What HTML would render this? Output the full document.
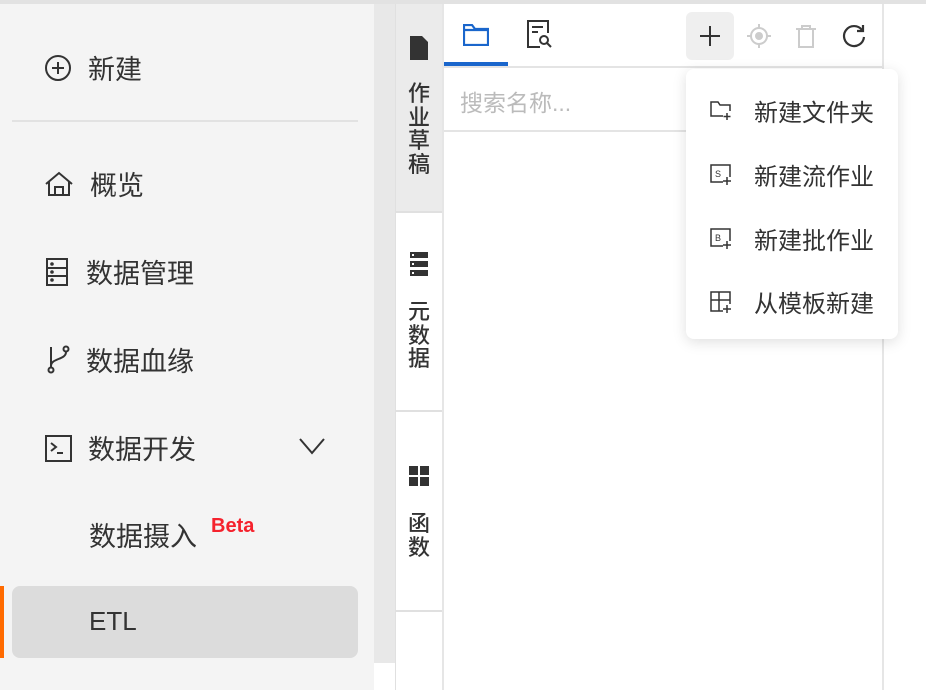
<!DOCTYPE html><html><head><meta charset="utf-8"><style>
*{margin:0;padding:0;box-sizing:border-box}
body{width:926px;height:690px;overflow:hidden;background:#fff;font-family:"Liberation Sans","Noto Sans CJK SC",sans-serif;position:relative;color:#333}
.a{position:absolute}
.side{left:0;top:4px;width:374px;height:686px;background:#f4f4f4}
.item{position:absolute;left:44px;font-size:27px;color:#333;display:flex;align-items:center}
.item svg{margin-right:16px}
.vt{position:absolute;left:404px;width:30px;font-size:22px;line-height:23.5px;text-align:center;color:#333;font-weight:500}
.mi{position:absolute;left:710px;font-size:24px;color:#333;display:flex;align-items:center}
.mi svg{margin-right:22px}
</style></head><body>
<div class="a" style="left:0;top:0;width:926px;height:4px;background:#e2e2e2"></div>
<div class="a side"></div>
<div class="a" style="left:374px;top:4px;width:21px;height:659px;background:#e8e8e8"></div>
<div class="a" style="left:12px;top:120px;width:346px;height:2px;background:#e2e2e2"></div>

<div class="item" style="top:48px"><svg width="28" height="28" viewBox="0 0 28 28" fill="none" stroke="#333" stroke-width="2"><circle cx="14" cy="14" r="12"/><path d="M14 8v12M8 14h12"/></svg>新建</div>
<div class="item" style="top:164px"><svg width="30" height="28" viewBox="0 0 30 28" fill="none" stroke="#333" stroke-width="2"><path d="M2 14L15 3l13 11M5 12v13h20V12M11 25v-8h8v8"/></svg>概览</div>
<div class="item" style="top:252px"><svg width="26" height="30" viewBox="0 0 26 30" fill="none" stroke="#333" stroke-width="2"><rect x="3" y="2" width="20" height="26"/><path d="M3 11h20M3 19h20"/><circle cx="8" cy="7" r=".8" fill="#333"/><circle cx="8" cy="15" r=".8" fill="#333"/><circle cx="8" cy="23" r=".8" fill="#333"/></svg>数据管理</div>
<div class="item" style="top:340px"><svg width="26" height="30" viewBox="0 0 26 30" fill="none" stroke="#333" stroke-width="2"><circle cx="7" cy="25" r="2.5"/><circle cx="22" cy="4" r="2.5"/><path d="M7 2v20M22 7c0 8-15 6-15 14"/></svg>数据血缘</div>
<div class="item" style="top:428px"><svg width="28" height="28" viewBox="0 0 28 28" fill="none" stroke="#333" stroke-width="2"><rect x="2" y="2" width="25" height="25"/><path d="M7 9l5 4-5 4M13 19h6"/></svg>数据开发</div>
<svg class="a" style="left:298px;top:436px" width="28" height="20" viewBox="0 0 28 20" fill="none" stroke="#333" stroke-width="2"><path d="M2 3l12 14L26 3"/></svg>
<div class="a" style="left:89px;top:515px;font-size:27px;color:#333">数据摄入</div>
<div class="a" style="left:211px;top:515px;font-size:20px;color:#f5222d;font-weight:bold">Beta</div>
<div class="a" style="left:0;top:586px;width:4px;height:72px;background:#ff6a00"></div>
<div class="a" style="left:12px;top:586px;width:346px;height:72px;background:#dcdcdc;border-radius:8px"></div>
<div class="a" style="left:89px;top:606px;font-size:26px;color:#333">ETL</div>

<div class="a" style="left:395px;top:4px;width:48px;height:207px;background:#ebebeb"></div>
<div class="a" style="left:395px;top:211px;width:48px;height:479px;background:#fff"></div>
<div class="a" style="left:395px;top:211px;width:48px;height:2px;background:#e0e0e0"></div>
<div class="a" style="left:395px;top:410px;width:48px;height:2px;background:#e0e0e0"></div>
<div class="a" style="left:395px;top:610px;width:48px;height:2px;background:#e0e0e0"></div>
<div class="a" style="left:395px;top:4px;width:1px;height:686px;background:#e0e0e0"></div>
<div class="a" style="left:442px;top:4px;width:2px;height:686px;background:#e6e6e6"></div>
<svg class="a" style="left:410px;top:36px" width="18" height="24" viewBox="0 0 18 24"><path d="M0 0h12l6 6v18H0z" fill="#333"/></svg>
<div class="vt" style="top:82px">作<br>业<br>草<br>稿</div>
<svg class="a" style="left:410px;top:252px" width="18" height="24" viewBox="0 0 18 24"><g fill="#333"><rect y="0" width="18" height="6"/><rect y="9" width="18" height="6"/><rect y="18" width="18" height="6"/></g><g fill="#fff"><rect x="2" y="2" width="2" height="2"/><rect x="2" y="11" width="2" height="2"/><rect x="2" y="20" width="2" height="2"/></g></svg>
<div class="vt" style="top:300px">元<br>数<br>据</div>
<svg class="a" style="left:409px;top:466px" width="20" height="20" viewBox="0 0 20 20" fill="#333"><rect width="9" height="9"/><rect x="11" width="9" height="9"/><rect y="11" width="9" height="9"/><rect x="11" y="11" width="9" height="9"/></svg>
<div class="vt" style="top:512px">函<br>数</div>

<div class="a" style="left:444px;top:66px;width:439px;height:2px;background:#e4e4e4"></div>
<div class="a" style="left:444px;top:62px;width:64px;height:4px;background:#1a66cc"></div>
<div class="a" style="left:444px;top:130px;width:439px;height:2px;background:#e4e4e4"></div>
<div class="a" style="left:882px;top:4px;width:2px;height:686px;background:#e6e6e6"></div>
<svg class="a" style="left:463px;top:24px" width="26" height="22" viewBox="0 0 26 22" fill="none" stroke="#1a66cc" stroke-width="2.2"><path d="M1 1h8l3 4h13v16H1z"/><path d="M1 6h24"/></svg>
<svg class="a" style="left:527px;top:20px" width="26" height="28" viewBox="0 0 26 28" fill="none" stroke="#333" stroke-width="2"><path d="M13 27H1V1h20v12"/><path d="M5 7h11M5 12h6"/><circle cx="17" cy="20" r="4"/><path d="M20 23l4 4"/></svg>
<div class="a" style="left:686px;top:12px;width:48px;height:48px;background:#efefef;border-radius:6px"></div>
<svg class="a" style="left:699px;top:25px" width="22" height="22" viewBox="0 0 22 22" stroke="#333" stroke-width="2"><path d="M11 1v20M1 11h20"/></svg>
<svg class="a" style="left:746px;top:23px" width="26" height="26" viewBox="0 0 26 26" fill="none" stroke="#ccc" stroke-width="2"><circle cx="13" cy="13" r="8"/><circle cx="13" cy="13" r="3" fill="#ccc"/><path d="M13 1v4M13 21v4M1 13h4M21 13h4"/></svg>
<svg class="a" style="left:795px;top:24px" width="22" height="24" viewBox="0 0 22 24" fill="none" stroke="#ccc" stroke-width="2"><path d="M1 5h20M7 5V2h8v3M4 5v18h14V5"/></svg>
<svg class="a" style="left:842px;top:24px" width="24" height="24" viewBox="0 0 24 24" fill="none" stroke="#333" stroke-width="2.2"><path d="M20 6A10 10 0 1 0 22 13"/><path d="M21 1v6h-6"/></svg>
<div class="a" style="left:460px;top:84px;font-size:23px;color:#bbb">搜索名称...</div>

<div class="a" style="left:686px;top:69px;width:212px;height:270px;background:#fff;border-radius:8px;box-shadow:0 3px 14px rgba(0,0,0,.13)"></div>
<div class="mi" style="top:93px"><svg width="22" height="20" viewBox="0 0 22 20" fill="none" stroke="#333" stroke-width="1.5"><path d="M13 15H1V1h7l2 3h10v6"/><path d="M17 12v7M13.5 15.5h7"/></svg>新建文件夹</div>
<div class="mi" style="top:157px"><svg width="22" height="22" viewBox="0 0 22 22" fill="none" stroke="#333" stroke-width="1.5"><path d="M13 18H1V1h19v12"/><text x="5" y="13" font-size="9" fill="#333" stroke="none" font-family="Liberation Sans">S</text><path d="M17 13v8M13 17h8"/></svg>新建流作业</div>
<div class="mi" style="top:221px"><svg width="22" height="22" viewBox="0 0 22 22" fill="none" stroke="#333" stroke-width="1.5"><path d="M13 18H1V1h19v12"/><text x="5" y="13" font-size="9" fill="#333" stroke="none" font-family="Liberation Sans">B</text><path d="M17 13v8M13 17h8"/></svg>新建批作业</div>
<div class="mi" style="top:284px"><svg width="22" height="22" viewBox="0 0 22 22" fill="none" stroke="#333" stroke-width="1.5"><path d="M13 20H1V1h19v12M1 9h19M9 1v19"/><path d="M17 14v8M13 18h8"/></svg>从模板新建</div>
</body></html>
